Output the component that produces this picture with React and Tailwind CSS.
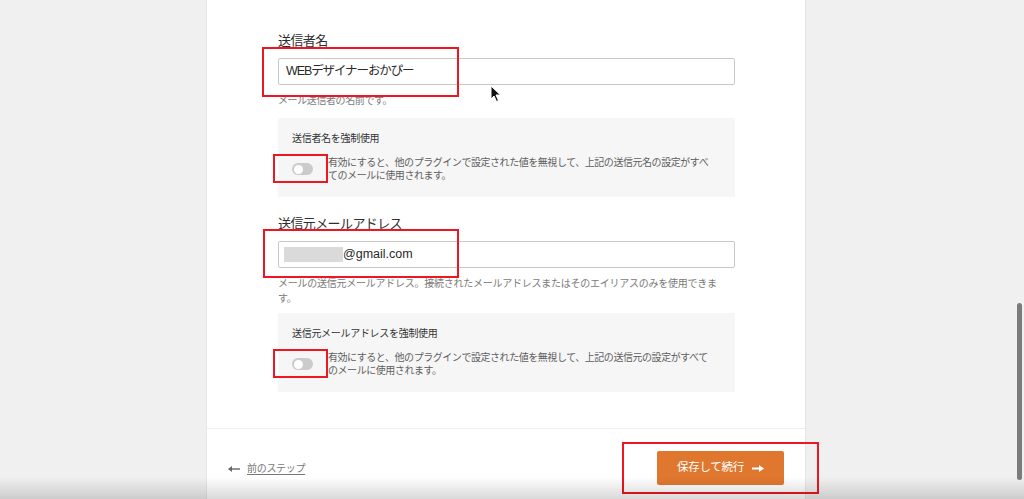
import React from "react";

const Toggle = () => (
  <div className="relative shrink-0">
    <div className="flex items-center w-[21px] h-[12px] rounded-full bg-[#cbcbcb]">
      <div className="ml-[2px] w-[9px] h-[9px] rounded-full bg-white" />
    </div>
    {/* annotation */}
    <div className="absolute left-[-19px] top-[-9px] w-[55px] h-[29px] border-2 border-[#ee1620]" />
  </div>
);

const ForceBox = ({ title, lines }) => (
  <div className="mt-[10px] h-[79px] bg-[#f6f6f6] pl-[14px] pt-[14px]">
    <p className="text-[10px] leading-[14px] tracking-[-0.3px] text-[#333]">{title}</p>
    <div className="mt-[10px] flex items-center gap-[15px]">
      <Toggle />
      <p className="text-[10px] leading-[13px] tracking-[-0.45px] text-[#5e5e5e] whitespace-nowrap">
        {lines[0]}
        <br />
        {lines[1]}
      </p>
    </div>
  </div>
);

const Field = ({ label, children, boxClass }) => (
  <div>
    <p className="text-[13px] leading-[18px] tracking-[-0.6px] text-[#2e2e2e]">{label}</p>
    <div className="relative mt-[8px]">
      <div className="flex items-center h-[27px] border border-[#c8c8c8] rounded-[2px] bg-white text-[12.5px] text-[#2a2a2a]">
        {children}
      </div>
      <div className={`absolute border-2 border-[#ee1620] ${boxClass}`} />
    </div>
  </div>
);

export default function App() {
  return (
    <div className="relative h-[499px] overflow-hidden bg-[#f0f0f0] font-['Liberation_Sans','Noto_Sans_CJK_JP',sans-serif]">
      <div className="ml-[206px] w-[600px] h-full bg-white border-x border-[#e6e6e6] flex flex-col">
        {/* settings */}
        <div className="pl-[71px] pr-[70px] pt-[32px] pb-[36px] border-b border-[#eeeeee]">
          <Field label="送信者名" boxClass="left-[-16px] top-[-11px] w-[197px] h-[50px]">
            <span className="pl-[7px] tracking-[-1.1px]">WEBデザイナーおかぴー</span>
          </Field>
          <p className="mt-[8px] text-[10px] leading-[15px] tracking-[-0.4px] text-[#7a7a7a]">
            メール送信者の名前です。
          </p>
          <ForceBox
            title="送信者名を強制使用"
            lines={[
              "有効にすると、他のプラグインで設定された値を無視して、上記の送信元名の設定がすべ",
              "てのメールに使用されます。",
            ]}
          />

          <div className="mt-[18px]">
            <Field label="送信元メールアドレス" boxClass="left-[-15px] top-[-12px] w-[196px] h-[49px]">
              <span className="ml-[5px] w-[59px] h-[15px] bg-[#dadada]" />
              <span>@gmail.com</span>
            </Field>
          </div>
          <p className="mt-[8px] text-[10px] leading-[15px] tracking-[-0.25px] text-[#7a7a7a] whitespace-nowrap">
            メールの送信元メールアドレス。接続されたメールアドレスまたはそのエイリアスのみを使用できま
            <br />
            す。
          </p>
          <div className="-mt-[3px]">
            <ForceBox
              title="送信元メールアドレスを強制使用"
              lines={[
                "有効にすると、他のプラグインで設定された値を無視して、上記の送信元の設定がすべて",
                "のメールに使用されます。",
              ]}
            />
          </div>
        </div>

        {/* footer */}
        <div className="flex items-start justify-between px-[21px] pt-[22px]">
          <a className="mt-[10px] flex items-center gap-[7px] text-[10px] text-[#777]">
            <svg width="12" height="8" viewBox="0 0 12 8">
              <path d="M12 4H3" stroke="#666" strokeWidth="1.4" />
              <path d="M0 4L4 1V7Z" fill="#666" />
            </svg>
            <span className="underline underline-offset-2 tracking-[-0.3px]">前のステップ</span>
          </a>
          <div className="relative">
            <button className="flex items-center justify-center gap-[8px] w-[127px] h-[34px] rounded-[2px] bg-[#e0772f] text-white text-[11.5px] tracking-[-0.3px]">
              <span>保存して続行</span>
              <svg width="12" height="9" viewBox="0 0 12 9">
                <path d="M0 4.5H8" stroke="#fff" strokeWidth="2" />
                <path d="M12 4.5L7 1V8Z" fill="#fff" />
              </svg>
            </button>
            <div className="absolute left-[-35px] top-[-9px] w-[197px] h-[52px] border-2 border-[#ee1620]" />
          </div>
        </div>
      </div>

      {/* mouse cursor */}
      <svg className="absolute left-[490px] top-[85px]" width="12" height="18" viewBox="0 0 12 18">
        <path d="M1 1 L1 14 L4 11 L6.5 16.5 L8.5 15.5 L6 10 L10.5 10 Z" fill="#111" stroke="#fff" strokeWidth="1" />
      </svg>

      {/* scrollbar */}
      <div className="absolute right-[2px] top-[303px] w-[5px] h-[177px] rounded-full bg-[#7b7b7b]" />

      {/* bottom fade */}
      <div className="pointer-events-none absolute inset-x-0 bottom-0 h-[22px] bg-gradient-to-b from-transparent to-black/15" />
    </div>
  );
}
